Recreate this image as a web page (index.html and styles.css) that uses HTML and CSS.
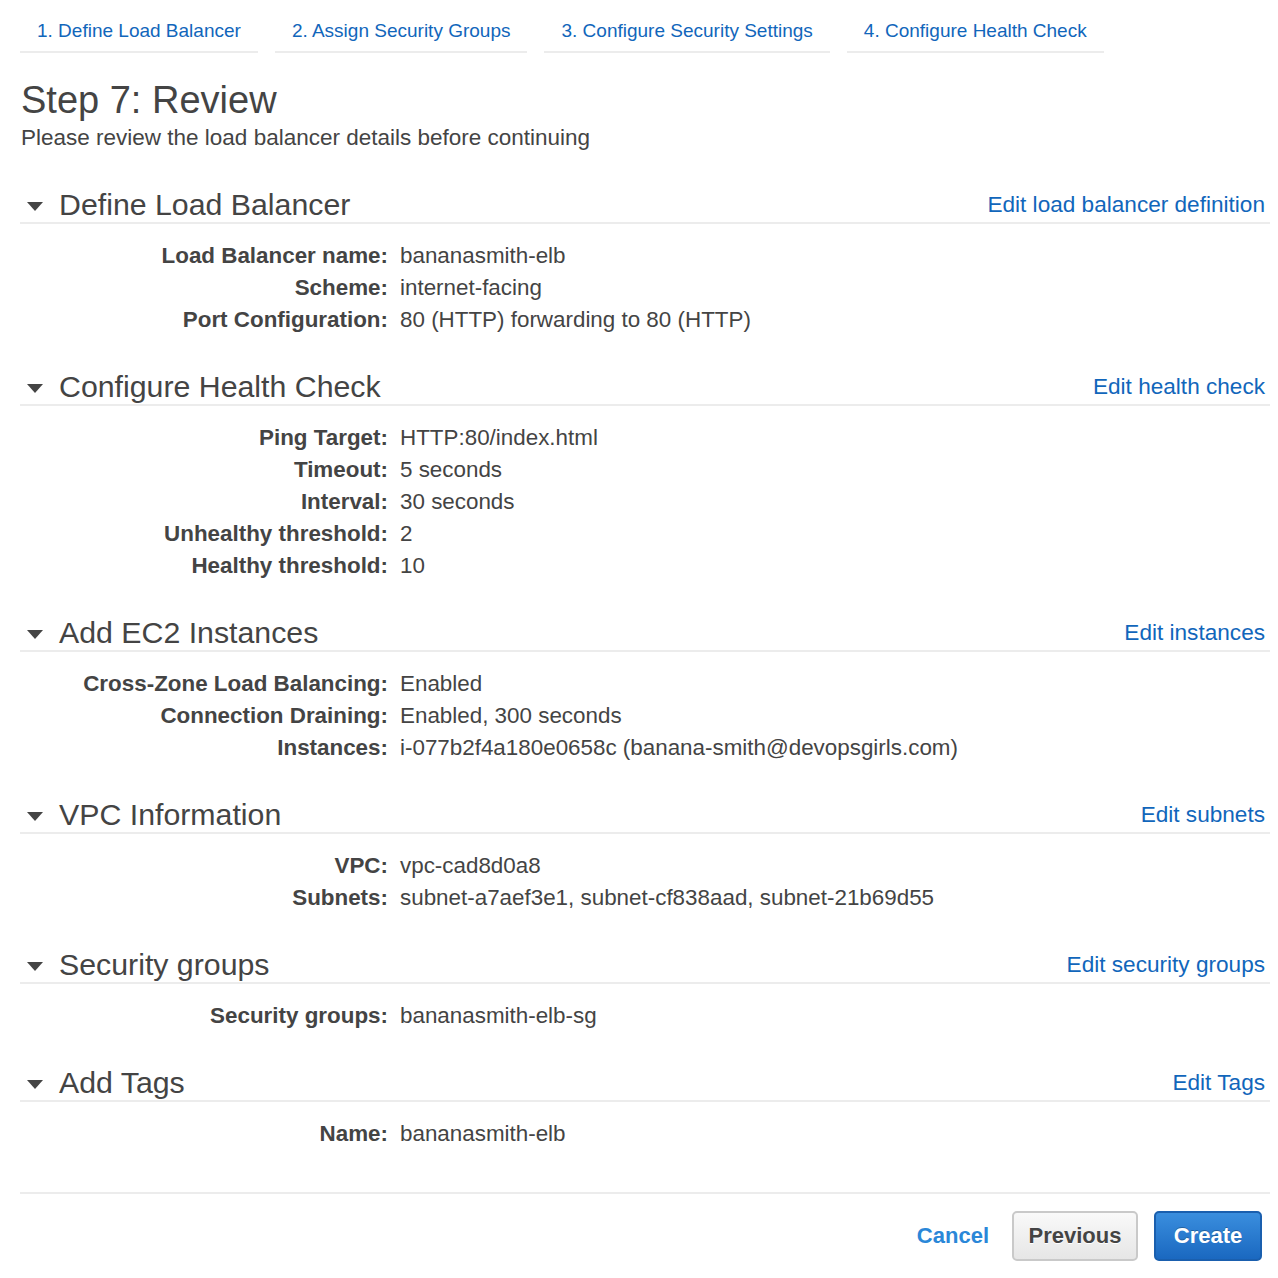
FILE: index.html
```html
<!DOCTYPE html>
<html>
<head>
<meta charset="utf-8">
<title>Step 7: Review</title>
<link rel="stylesheet" href="styles.css">
</head>
<body>
<div class="page">
  <nav class="tabs">
    <a class="tab">1. Define Load Balancer</a>
    <a class="tab">2. Assign Security Groups</a>
    <a class="tab">3. Configure Security Settings</a>
    <a class="tab">4. Configure Health Check</a>
  </nav>

  <h1 class="title">Step 7: Review</h1>
  <p class="subtitle">Please review the load balancer details before continuing</p>

  <section class="section">
    <div class="section-head">
      <span class="caret"></span>
      <h2 class="section-title">Define Load Balancer</h2>
      <a class="edit">Edit load balancer definition</a>
    </div>
    <dl class="rows">
      <dt>Load Balancer name:</dt><dd>bananasmith-elb</dd>
      <dt>Scheme:</dt><dd>internet-facing</dd>
      <dt>Port Configuration:</dt><dd>80 (HTTP) forwarding to 80 (HTTP)</dd>
    </dl>
  </section>

  <section class="section">
    <div class="section-head">
      <span class="caret"></span>
      <h2 class="section-title">Configure Health Check</h2>
      <a class="edit">Edit health check</a>
    </div>
    <dl class="rows">
      <dt>Ping Target:</dt><dd>HTTP:80/index.html</dd>
      <dt>Timeout:</dt><dd>5 seconds</dd>
      <dt>Interval:</dt><dd>30 seconds</dd>
      <dt>Unhealthy threshold:</dt><dd>2</dd>
      <dt>Healthy threshold:</dt><dd>10</dd>
    </dl>
  </section>

  <section class="section">
    <div class="section-head">
      <span class="caret"></span>
      <h2 class="section-title">Add EC2 Instances</h2>
      <a class="edit">Edit instances</a>
    </div>
    <dl class="rows">
      <dt>Cross-Zone Load Balancing:</dt><dd>Enabled</dd>
      <dt>Connection Draining:</dt><dd>Enabled, 300 seconds</dd>
      <dt>Instances:</dt><dd>i-077b2f4a180e0658c (banana-smith@devopsgirls.com)</dd>
    </dl>
  </section>

  <section class="section">
    <div class="section-head">
      <span class="caret"></span>
      <h2 class="section-title">VPC Information</h2>
      <a class="edit">Edit subnets</a>
    </div>
    <dl class="rows">
      <dt>VPC:</dt><dd>vpc-cad8d0a8</dd>
      <dt>Subnets:</dt><dd>subnet-a7aef3e1, subnet-cf838aad, subnet-21b69d55</dd>
    </dl>
  </section>

  <section class="section">
    <div class="section-head">
      <span class="caret"></span>
      <h2 class="section-title">Security groups</h2>
      <a class="edit">Edit security groups</a>
    </div>
    <dl class="rows">
      <dt>Security groups:</dt><dd>bananasmith-elb-sg</dd>
    </dl>
  </section>

  <section class="section">
    <div class="section-head">
      <span class="caret"></span>
      <h2 class="section-title">Add Tags</h2>
      <a class="edit">Edit Tags</a>
    </div>
    <dl class="rows">
      <dt>Name:</dt><dd>bananasmith-elb</dd>
    </dl>
  </section>

  <footer class="footer">
    <a class="cancel">Cancel</a>
    <button class="btn btn-prev">Previous</button>
    <button class="btn btn-create">Create</button>
  </footer>
</div>
</body>
</html>
```

FILE: styles.css
```css
* { box-sizing: border-box; }

html, body {
  margin: 0;
  padding: 0;
  background: #fff;
}

body {
  font-family: "Liberation Sans", Arial, Helvetica, sans-serif;
  color: #444;
}

.page {
  padding: 0 8px 0 20px;
}

.tabs {
  display: flex;
  gap: 17px;
}

.tab {
  display: block;
  padding: 18px 17px 7px 17px;
  line-height: 26px;
  font-size: 19px;
  color: #1166bb;
  border-bottom: 2px solid #ececec;
  white-space: nowrap;
}

.title {
  margin: 25px 0 0 1px;
  font-size: 38px;
  font-weight: normal;
  line-height: 44px;
  color: #444;
}

.subtitle {
  margin: 2px 0 0 1px;
  font-size: 22.5px;
  line-height: 28px;
  color: #444;
}

.section-head {
  display: flex;
  align-items: center;
  height: 36px;
  border-bottom: 2px solid #ececec;
  margin-top: 34px;
}

.subtitle + .section .section-head {
  margin-top: 36px;
}

.caret {
  width: 0;
  height: 0;
  border-left: 8.5px solid transparent;
  border-right: 8.5px solid transparent;
  border-top: 9px solid #444;
  margin: 2px 16px 0 7px;
}

.section-title {
  margin: 0;
  font-size: 30.3px;
  font-weight: normal;
  line-height: 34px;
  color: #444;
  flex: 1;
}

.edit {
  font-size: 22.6px;
  line-height: 34px;
  color: #1166bb;
  padding-right: 5px;
}

.rows {
  display: grid;
  grid-template-columns: 368px 1fr;
  column-gap: 12px;
  margin: 16px 0 0;
  font-size: 22.4px;
  line-height: 32px;
}

.rows dt {
  text-align: right;
  font-weight: bold;
  color: #444;
}

.rows dd {
  margin: 0;
  color: #444;
}

.footer {
  margin-top: 42px;
  border-top: 2px solid #ececec;
  padding: 17px 8px 20px 0;
  display: flex;
  justify-content: flex-end;
  align-items: center;
}

.cancel {
  font-size: 22px;
  font-weight: bold;
  color: #2a87d8;
  margin-right: 23px;
}

.btn {
  font-family: "Liberation Sans", Arial, Helvetica, sans-serif;
  font-size: 22px;
  font-weight: bold;
  height: 50px;
  border-radius: 5px;
  padding: 0;
}

.btn-prev {
  width: 126px;
  color: #444;
  background: linear-gradient(#f9f9f9, #e6e6e6);
  border: 2px solid #c9c9c9;
  text-shadow: 0 1px 0 #fff;
  margin-right: 16px;
}

.btn-create {
  width: 108px;
  color: #fff;
  background: linear-gradient(#3a8ede, #1a68c0);
  border: 2px solid #1a5fae;
  text-shadow: 0 -1px 0 rgba(0,0,0,0.25);
}
```
